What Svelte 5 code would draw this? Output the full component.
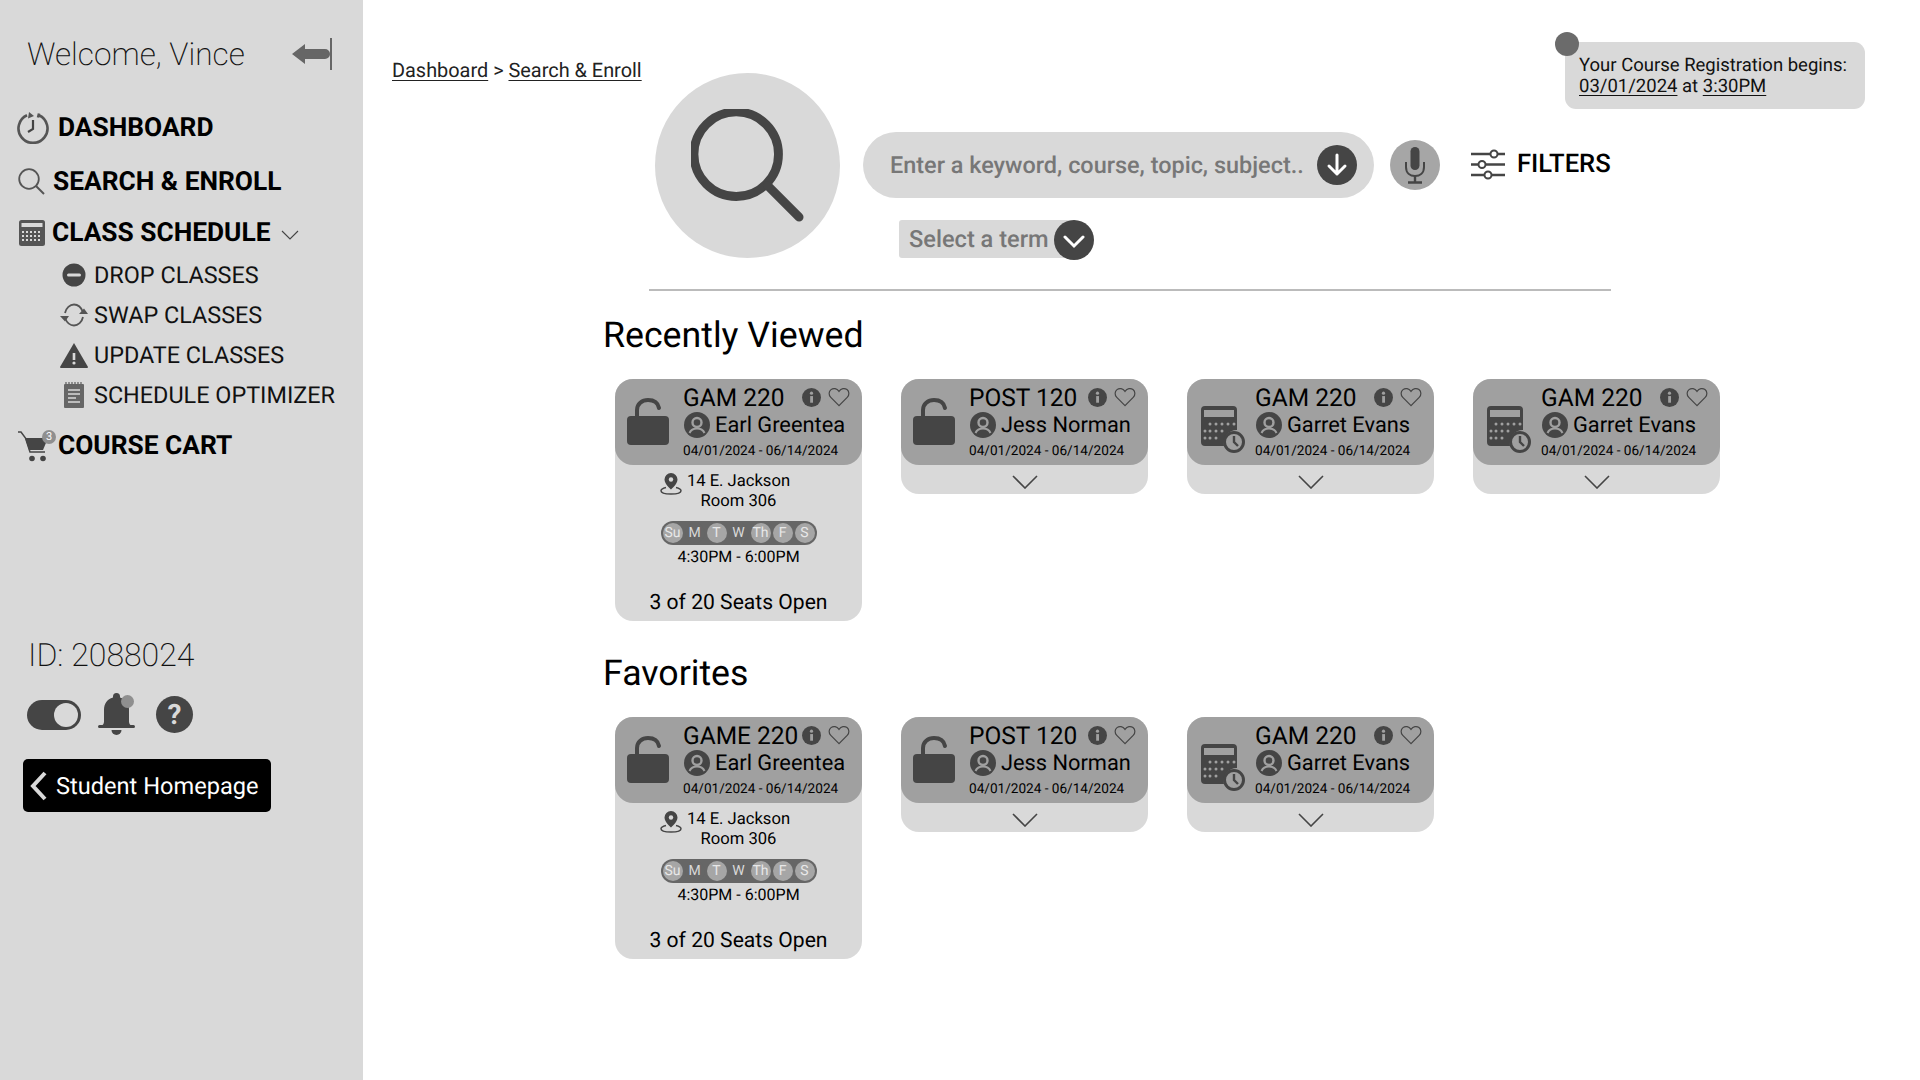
<script>
  const recent = [
    { code: 'GAM 220', name: 'Earl Greentea', icon: 'lock', open: true },
    { code: 'POST 120', name: 'Jess Norman', icon: 'lock' },
    { code: 'GAM 220', name: 'Garret Evans', icon: 'cal' },
    { code: 'GAM 220', name: 'Garret Evans', icon: 'cal' }
  ];
  const favorites = [
    { code: 'GAME 220', name: 'Earl Greentea', icon: 'lock', open: true },
    { code: 'POST 120', name: 'Jess Norman', icon: 'lock' },
    { code: 'GAM 220', name: 'Garret Evans', icon: 'cal' }
  ];
  const days = [
    { d: 'Su' }, { d: 'M', on: true }, { d: 'T' }, { d: 'W', on: true }, { d: 'Th' }, { d: 'F' }, { d: 'S' }
  ];
</script>

{#snippet card(c)}
  <article class="card">
    <header class="card-head">
      <div class="card-icon">
        {#if c.icon === 'lock'}
          <svg class="lock" viewBox="0 0 42 47"><path d="M10 22V12C10 6 15 2 21 2s10 3 11 8" fill="none" stroke="#454545" stroke-width="4" stroke-linecap="round"/><rect x="0" y="18" width="42" height="29" rx="4" fill="#454545"/></svg>
        {:else}
          <svg class="calclock" viewBox="0 0 44 47"><path d="M4 0h28a4 4 0 0 1 4 4v20a13 13 0 0 0-13 16H4a4 4 0 0 1-4-4V4a4 4 0 0 1 4-4z" fill="#454545"/><rect x="3" y="4" width="30" height="7" fill="#a0a0a0"/><g fill="#a0a0a0"><circle cx="9" cy="18" r="1.5"/><circle cx="15" cy="18" r="1.5"/><circle cx="21" cy="18" r="1.5"/><circle cx="27" cy="18" r="1.5"/><circle cx="33" cy="18" r="1.5"/><circle cx="4" cy="25" r="1.5"/><circle cx="9" cy="25" r="1.5"/><circle cx="15" cy="25" r="1.5"/><circle cx="21" cy="25" r="1.5"/><circle cx="4" cy="32" r="1.5"/><circle cx="9" cy="32" r="1.5"/><circle cx="15" cy="32" r="1.5"/></g><circle cx="33" cy="36" r="9.5" fill="#a0a0a0" stroke="#454545" stroke-width="3"/><path d="M33 30v6l4 4" fill="none" stroke="#454545" stroke-width="2.4"/></svg>
        {/if}
      </div>
      <div class="card-text">
        <div class="title-row">
          <span class="code">{c.code}</span>
          <svg class="info" viewBox="0 0 20 20"><circle cx="10" cy="10" r="10" fill="#454545"/><rect x="8.6" y="8.5" width="3" height="7" fill="#a0a0a0"/><circle cx="10" cy="5.5" r="1.7" fill="#a0a0a0"/></svg>
          <svg class="heart" viewBox="0 0 22 20"><path d="M11 18.6 2.8 10.4C.4 8 .7 4.4 3 2.600 5.400.8 8.800 1.300 11 4.400c2.200-3.100 5.600-3.600 8-1.800 2.300 1.800 2.600 5.400.2 7.800z" fill="none" stroke="#454545" stroke-width="1.2"/></svg>
        </div>
        <div class="name-row">
          <svg class="avatar" viewBox="0 0 26 26"><circle cx="13" cy="13" r="13" fill="#454545"/><circle cx="13" cy="10.5" r="4.5" fill="none" stroke="#a0a0a0" stroke-width="2.4"/><path d="M5.500 21c1.500-3.500 4.500-4.500 7.500-4.500s6 1 7.500 4.500" fill="none" stroke="#a0a0a0" stroke-width="2"/></svg>
          <span class="name">{c.name}</span>
        </div>
        <div class="dates">04/01/2024 - 06/14/2024</div>
      </div>
    </header>
    {#if c.open}
      <div class="card-body">
        <div class="place">
          <svg class="pin" viewBox="0 0 22 22"><path d="M11 0a6.5 6.5 0 0 0-6.5 6.500C4.500 11 11 16.500 11 16.500S17.500 11 17.500 6.500A6.500 6.500 0 0 0 11 0z" fill="#454545"/><circle cx="11" cy="6.5" r="2.2" fill="#d9d9d9"/><path d="M6 14.500c-3 .7-5 1.700-5 3.200C1 19.800 5.500 21 11 21s10-1.200 10-3.300c0-1.500-2-2.500-5-3.200" fill="none" stroke="#454545" stroke-width="1.5"/></svg>
          <span>14 E. Jackson<br />Room 306</span>
        </div>
        <div class="days">
          {#each days as day}
            <span class="day" class:on={day.on}>{day.d}</span>
          {/each}
        </div>
        <div class="time">4:30PM - 6:00PM</div>
        <div class="seats">3 of 20 Seats Open</div>
      </div>
    {:else}
      <div class="card-more">
        <svg class="more" viewBox="0 0 26 14"><path d="M1 1l12 12L25 1" fill="none" stroke="#454545" stroke-width="1.6"/></svg>
      </div>
    {/if}
  </article>
{/snippet}

<div class="page">
  <aside class="side">
    <div class="welcome">
      <span>Welcome, Vince</span>
      <svg class="collapse" viewBox="0 0 40 32"><path d="M0 16 13 6v5h20a5 5 0 0 1 0 10H13v5z" fill="#666"/><rect x="38" y="0" width="2" height="32" fill="#666"/></svg>
    </div>

    <nav class="nav">
      <a class="main-item dash">
        <svg class="i-dash" viewBox="0 0 32 32"><path d="M10 3.200A14.500 14.500 0 1 0 22 3.200" fill="none" stroke="#555" stroke-width="2.6"/><path d="M12 0l5 4-6 2.500z" fill="#555"/><path d="M22 1.500l-1 4" stroke="#555" stroke-width="2.600"/><path d="M16 8v9l-5 3" fill="none" stroke="#444" stroke-width="2.200"/></svg>
        DASHBOARD
      </a>
      <a class="main-item search">
        <svg class="i-search" viewBox="0 0 27 27"><circle cx="11" cy="11" r="9.8" fill="none" stroke="#555" stroke-width="1.8"/><path d="M18 18l8 8" stroke="#555" stroke-width="2"/></svg>
        SEARCH &amp; ENROLL
      </a>
      <a class="main-item sched">
        <svg class="i-cal" viewBox="0 0 26 26"><rect width="26" height="26" rx="2.5" fill="#555"/><rect x="2.5" y="3" width="21" height="4" fill="#d9d9d9"/><g fill="#d9d9d9"><rect x="3" y="11" width="2" height="2"/><rect x="7" y="11" width="2" height="2"/><rect x="11" y="11" width="2" height="2"/><rect x="15" y="11" width="2" height="2"/><rect x="19" y="11" width="2" height="2"/><rect x="3" y="15" width="2" height="2"/><rect x="7" y="15" width="2" height="2"/><rect x="11" y="15" width="2" height="2"/><rect x="15" y="15" width="2" height="2"/><rect x="19" y="15" width="2" height="2"/><rect x="3" y="19" width="2" height="2"/><rect x="7" y="19" width="2" height="2"/><rect x="11" y="19" width="2" height="2"/><rect x="15" y="19" width="2" height="2"/><rect x="19" y="19" width="2" height="2"/></g></svg>
        CLASS SCHEDULE
        <svg class="i-chev" viewBox="0 0 18 10"><path d="M1 1l8 8 8-8" fill="none" stroke="#444" stroke-width="1.1"/></svg>
      </a>
      <ul class="sub">
        <li><span class="sub-icon"><svg width="24" height="24" viewBox="0 0 24 24"><circle cx="12" cy="12" r="11.5" fill="#454545"/><rect x="5" y="10.5" width="14" height="3" rx="1.5" fill="#d9d9d9"/></svg></span>DROP CLASSES</li>
        <li><span class="sub-icon"><svg width="28" height="24" viewBox="0 0 28 24"><path d="M5 10C6 5 10 1.500 14 1.500S21 4 23 9M23 14c-1 5-5 8.500-9 8.500S7 20 5 15" fill="none" stroke="#555" stroke-width="1.8"/><path d="M0 13h9l-4 5.500zM19 11h9l-4-5.500z" fill="#555"/></svg></span>SWAP CLASSES</li>
        <li><span class="sub-icon"><svg width="28" height="25" viewBox="0 0 28 25"><path d="M14 0 28 24a1 1 0 0 1-1 1H1a1 1 0 0 1-1-1z" fill="#454545"/><rect x="12.7" y="10" width="2.6" height="7" fill="#d9d9d9"/><circle cx="14" cy="20" r="1.6" fill="#d9d9d9"/></svg></span>UPDATE CLASSES</li>
        <li><span class="sub-icon"><svg width="20" height="26" viewBox="0 0 20 26"><path d="M1 2h18a1 1 0 0 1 1 1v22a1 1 0 0 1-1 1H1a1 1 0 0 1-1-1V3a1 1 0 0 1 1-1z" fill="#666"/><path d="M2 0v3M5 0v3M8 0v3M11 0v3M14 0v3M17 0v3" stroke="#666" stroke-width="1.3"/><path d="M4 8h12M4 12h12M4 16h8M4 20h12" stroke="#d9d9d9" stroke-width="1.5"/></svg></span>SCHEDULE OPTIMIZER</li>
      </ul>
      <a class="main-item cart">
        <span class="cart-icon">
          <svg width="34" height="31" viewBox="0 0 34 31"><path d="M0 1h3l4.500 6L12 21h15" fill="none" stroke="#454545" stroke-width="1.500"/><path d="M7 7h23l-5 12H11z" fill="#454545"/><circle cx="14" cy="27.500" r="2.800" fill="#454545"/><circle cx="25" cy="27.500" r="2.800" fill="#454545"/></svg>
          <b class="badge">3</b>
        </span>
        COURSE CART
      </a>
    </nav>

    <div class="student-id">ID: 2088024</div>
    <div class="tools">
      <span class="toggle"><i></i></span>
      <span class="bell">
        <svg width="37" height="43" viewBox="0 0 37 43"><path d="M18.5 0a3.500 3.500 0 0 1 3.500 3.500v1c6 1.500 9 6.500 9 12v12c0 2 1 3.500 3 4.500H3c2-1 3-2.500 3-4.500v-12c0-5.500 3-10.500 9-12v-1A3.500 3.500 0 0 1 18.500 0z" fill="#454545"/><rect x="0" y="32" width="37" height="3" rx="1.5" fill="#454545"/><path d="M13.500 37h10a5 5 0 0 1-10 0z" fill="#454545"/></svg>
        <b></b>
      </span>
      <span class="help">?</span>
    </div>
    <a class="home">
      <svg class="home-chev" viewBox="0 0 17 30"><path d="M15 2 3 15l12 13" fill="none" stroke="#d9d9d9" stroke-width="4"/></svg>
      Student Homepage
    </a>
  </aside>

  <main class="main">
    <div class="top">
      <div class="crumbs"><u>Dashboard</u> &gt; <u>Search &amp; Enroll</u></div>
      <div class="notice">
        <b class="dot"></b>
        Your Course Registration begins:<br /><u>03/01/2024</u> at <u>3:30PM</u>
      </div>
      <section class="finder">
        <div class="big-search">
          <svg width="114" height="114" viewBox="0 0 116 116"><circle cx="46" cy="46" r="43" fill="none" stroke="#454545" stroke-width="9"/><path d="M78 78l32 32" stroke="#454545" stroke-width="9" stroke-linecap="round"/></svg>
        </div>
        <div class="finder-fields">
          <div class="search-row">
            <div class="pill">
              <span class="placeholder">Enter a keyword, course, topic, subject..</span>
              <span class="go"><svg width="24" height="26" viewBox="0 0 24 26"><path d="M12 3v19M4 14l8 8 8-8" fill="none" stroke="#fff" stroke-width="3" stroke-linecap="round" stroke-linejoin="round"/></svg></span>
            </div>
            <span class="mic"><svg width="26" height="38" viewBox="0 0 26 38"><rect x="8.5" y="1" width="9" height="23" rx="4.500" fill="#454545"/><path d="M4 16v5c0 6 4 9 9 9s9-3 9-9v-5" fill="none" stroke="#454545" stroke-width="2"/><path d="M13 30v6M6 36.500h14" stroke="#454545" stroke-width="2.4"/></svg></span>
            <div class="filters">
              <svg width="34" height="31" viewBox="0 0 34 31"><path d="M0 5h34M0 15.5h34M0 26h34" stroke="#454545" stroke-width="2.6"/><circle cx="23" cy="5" r="3.5" fill="#fff" stroke="#454545" stroke-width="2"/><circle cx="11" cy="15.5" r="3.5" fill="#fff" stroke="#454545" stroke-width="2"/><circle cx="17" cy="26" r="3.5" fill="#fff" stroke="#454545" stroke-width="2"/></svg>
              FILTERS
            </div>
          </div>
          <div class="term">
            <span>Select a term</span>
            <span class="term-go"><svg width="22" height="14" viewBox="0 0 22 14"><path d="M2 2l9 9 9-9" fill="none" stroke="#fff" stroke-width="3" stroke-linecap="round"/></svg></span>
          </div>
        </div>
      </section>
    </div>
    <hr class="rule" />

    <h2 class="recent-h">Recently Viewed</h2>
    <div class="cards">
      {#each recent as c}{@render card(c)}{/each}
    </div>
    <h2 class="fav-h">Favorites</h2>
    <div class="cards">
      {#each favorites as c}{@render card(c)}{/each}
    </div>
  </main>
</div>

<style>
  :global(body) { margin: 0; background: #fff; }
  .page {
    display: flex;
    width: 1920px;
    height: 1080px;
    overflow: hidden;
    font-family: Roboto, "Liberation Sans", sans-serif;
    color: #000;
    text-rendering: geometricPrecision;
  }
  u { text-underline-offset: 3px; text-decoration-thickness: 1px; }

  /* sidebar */
  .side {
    flex: none;
    width: 363px;
    background: #d9d9d9;
    padding-top: 34px;
    box-sizing: border-box;
  }
  .welcome {
    display: flex;
    align-items: center;
    padding-left: 27px;
    font-size: 31.6px;
    font-weight: 200;
    color: #111;
    height: 40px;
  }
  .collapse { width: 40px; height: 32px; margin-left: auto; margin-right: 31px; }
  .nav { display: flex; flex-direction: column; margin-top: 38px; }
  .main-item {
    display: flex;
    align-items: center;
    font-size: 26.3px;
    font-weight: 700;
    color: #000;
    padding-left: 17px;
  }
  .dash { height: 32px; gap: 9px; }
  .search { height: 27px; gap: 8px; margin-top: 24px; padding-left: 18px; }
  .sched { height: 26px; gap: 7px; margin-top: 25px; padding-left: 19px; }
  .i-dash { width: 32px; height: 32px; }
  .i-search { width: 27px; height: 27px; }
  .i-cal { width: 26px; height: 26px; }
  .i-chev { width: 18px; height: 10px; margin-left: 4px; margin-top: 4px; }
  .sub {
    list-style: none;
    margin: 0;
    padding: 9px 0 0 94px;
    font-size: 23.4px;
    color: #111;
  }
  .sub li { position: relative; display: flex; align-items: center; height: 40px; }
  .sub-icon {
    position: absolute;
    left: -36px;
    width: 32px;
    display: flex;
    justify-content: center;
  }
  .cart { margin-top: 14px; height: 34px; padding-left: 18px; gap: 5px; }
  .cart-icon { position: relative; width: 35px; height: 31px; }
  .badge {
    position: absolute;
    right: -3px;
    top: -1px;
    width: 14px;
    height: 14px;
    border-radius: 50%;
    background: #8f8f8f;
    color: #fff;
    font-size: 11px;
    font-weight: 400;
    line-height: 14px;
    text-align: center;
  }
  .student-id {
    margin-top: 172px;
    padding-left: 28px;
    font-size: 32px;
    font-weight: 200;
    color: #111;
    line-height: 40px;
  }
  .tools { display: flex; align-items: center; margin-top: 18px; padding-left: 27px; height: 43px; }
  .toggle {
    width: 54px;
    height: 30px;
    border-radius: 15px;
    background: #454545;
    display: flex;
    align-items: center;
    justify-content: flex-end;
    padding-right: 3px;
    box-sizing: border-box;
  }
  .toggle i { width: 24px; height: 24px; border-radius: 50%; background: #d9d9d9; }
  .bell { position: relative; display: flex; margin-left: 17px; }
  .bell b {
    position: absolute;
    right: 1px;
    top: 2px;
    width: 13px;
    height: 13px;
    border-radius: 50%;
    background: #8f8f8f;
  }
  .help {
    margin-left: 21px;
    width: 37px;
    height: 37px;
    border-radius: 50%;
    background: #454545;
    color: #d9d9d9;
    font-size: 28px;
    font-weight: 700;
    line-height: 37px;
    text-align: center;
  }
  .home {
    display: flex;
    align-items: center;
    margin: 23px 0 0 23px;
    width: 248px;
    height: 53px;
    border-radius: 5px;
    background: #000;
    color: #fff;
    font-size: 23.6px;
    box-sizing: border-box;
    padding-left: 7px;
    gap: 9px;
  }
  .home-chev { width: 17px; height: 30px; }

  /* main */
  .main { flex: 1; min-width: 0; }
  .top { display: grid; padding-left: 29px; }
  .crumbs { grid-area: 1 / 1; font-size: 19.9px; color: #222; margin-top: 59px; line-height: 24px; }
  .notice {
    grid-area: 1 / 1;
    justify-self: start;
    position: relative;
    margin: 42px 0 0 1173px;
    width: 300px;
    height: 67px;
    box-sizing: border-box;
    padding: 13px 0 0 14px;
    border-radius: 11px;
    background: #d9d9d9;
    font-size: 18.5px;
    line-height: 21px;
    color: #111;
  }
  .dot {
    position: absolute;
    left: -10px;
    top: -10px;
    width: 24px;
    height: 24px;
    border-radius: 50%;
    background: #6b6b6b;
  }
  .finder {
    grid-area: 1 / 1;
    display: flex;
    align-items: flex-start;
    margin: 73px 0 0 263px;
    gap: 23px;
  }
  .big-search {
    flex: none;
    width: 185px;
    height: 185px;
    border-radius: 50%;
    background: #d9d9d9;
    display: flex;
    align-items: center;
    justify-content: center;
  }
  .finder-fields { padding-top: 59px; }
  .search-row { display: flex; align-items: center; }
  .pill {
    display: flex;
    align-items: center;
    box-sizing: border-box;
    width: 511px;
    height: 66px;
    border-radius: 33px;
    background: #d9d9d9;
    padding: 0 17px 0 27px;
  }
  .placeholder { font-size: 23.45px; font-weight: 500; color: #777; white-space: nowrap; }
  .go {
    margin-left: auto;
    width: 40px;
    height: 40px;
    border-radius: 50%;
    background: #454545;
    display: flex;
    align-items: center;
    justify-content: center;
  }
  .mic {
    margin-left: 16px;
    width: 50px;
    height: 50px;
    border-radius: 50%;
    background: #a6a6a6;
    display: flex;
    align-items: center;
    justify-content: center;
  }
  .filters {
    display: flex;
    align-items: center;
    margin: 0 0 2px 31px;
    gap: 12px;
    font-size: 25.6px;
    font-weight: 500;
    color: #000;
  }
  .term {
    display: flex;
    align-items: center;
    position: relative;
    margin: 22px 0 0 36px;
    width: 178px;
    height: 38px;
    box-sizing: border-box;
    padding-left: 10px;
    border-radius: 3px;
    background: #d9d9d9;
    font-size: 23.6px;
    font-weight: 500;
    color: #777;
  }
  .term-go {
    position: absolute;
    right: -17px;
    top: 0;
    width: 40px;
    height: 40px;
    border-radius: 50%;
    background: #454545;
    display: flex;
    align-items: center;
    justify-content: center;
    padding-top: 3px;
    box-sizing: border-box;
  }
  .rule {
    margin: 31px 0 0 286px;
    width: 962px;
    height: 2px;
    border: 0;
    background: #bbb;
  }
  h2 {
    margin: 0 0 0 240px;
    font-size: 35.7px;
    font-weight: 400;
    line-height: 42px;
    color: #000;
  }
  .recent-h { margin-top: 23px; }
  .fav-h { margin-top: 31px; }
  .cards {
    display: flex;
    align-items: flex-start;
    gap: 39px;
    margin: 23px 0 0 252px;
  }
  .card {
    flex: none;
    width: 247px;
    border-radius: 18px;
    background: #d9d9d9;
    color: #000;
  }
  .card-head {
    display: flex;
    height: 86px;
    border-radius: 18px;
    background: #a0a0a0;
    box-sizing: border-box;
    position: relative;
  }
  .card-icon { flex: none; width: 68px; display: flex; padding-left: 12px; box-sizing: border-box; }
  .lock { width: 42px; height: 47px; margin-top: 19px; }
  .calclock { width: 44px; height: 47px; margin: 27px 0 0 2px; }
  .card-text { flex: 1; min-width: 0; }
  .title-row { display: flex; align-items: center; height: 34px; margin-top: 1px; padding-right: 12px; }
  .code { font-size: 24.5px; flex: 1; white-space: nowrap; }
  .info { width: 19px; height: 19px; }
  .heart { width: 22px; height: 20px; margin-left: 7px; }
  .name-row { display: flex; align-items: center; height: 24px; margin-top: -1px; gap: 5px; padding-left: 1px; }
  .avatar { width: 26px; height: 26px; flex: none; }
  .name { font-size: 21.8px; white-space: nowrap; }
  .dates { font-size: 13.6px; line-height: 17px; margin-top: 6px; white-space: nowrap; }
  .card-body { display: flex; flex-direction: column; align-items: center; padding-top: 7px; height: 156px; box-sizing: border-box; }
  .place { position: relative; font-size: 16.6px; line-height: 20px; text-align: center; }
  .pin { position: absolute; left: -27px; top: 1px; width: 22px; height: 22px; }
  .days {
    display: flex;
    gap: 2px;
    height: 24px;
    border-radius: 12px;
    background: #666;
    align-items: center;
    padding: 0 2px;
    margin-top: 9px;
  }
  .day {
    width: 20px;
    height: 20px;
    border-radius: 50%;
    background: #a6a6a6;
    color: #e8e8e8;
    font-size: 14px;
    line-height: 20px;
    text-align: center;
  }
  .day.on { background: #666; color: #d9d9d9; }
  .time { font-size: 16px; line-height: 20px; margin-top: 2px; }
  .seats { font-size: 21.1px; line-height: 26px; margin-top: 23px; }
  .card-more { display: flex; justify-content: center; height: 29px; padding-top: 10px; box-sizing: border-box; }
  .more { width: 26px; height: 14px; }
</style>
